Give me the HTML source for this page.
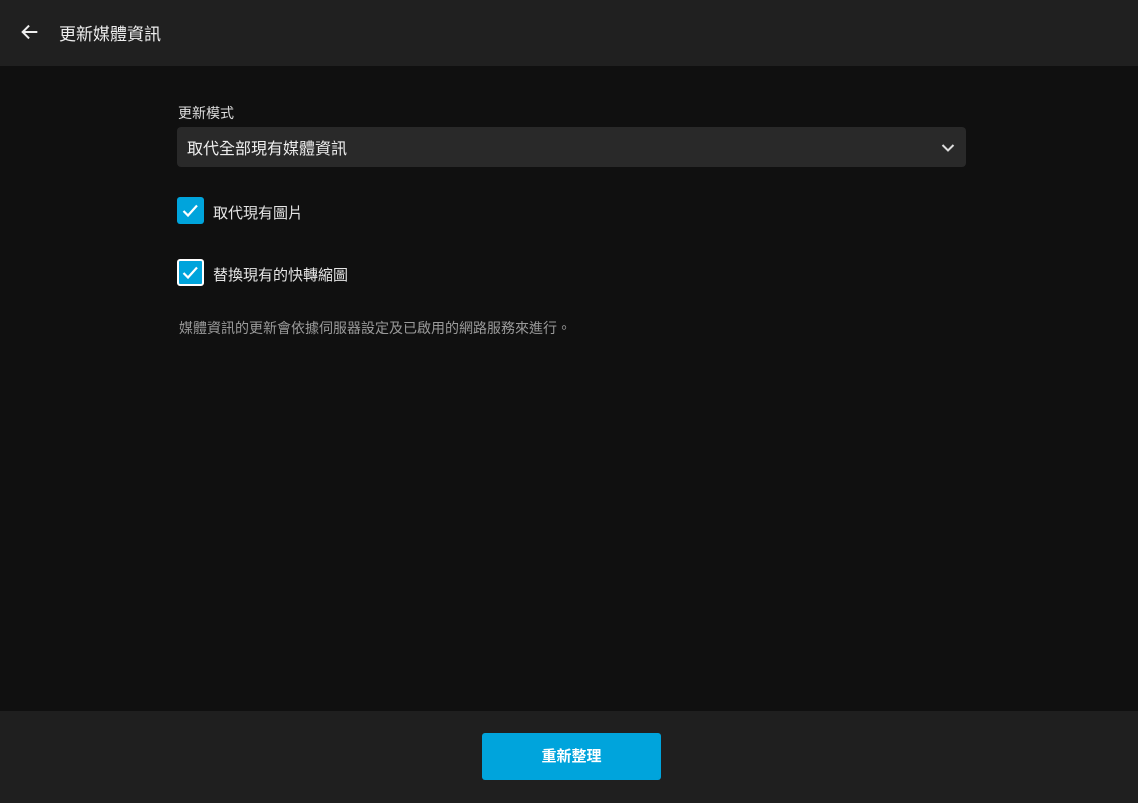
<!DOCTYPE html>
<html><head><meta charset="utf-8"><style>
body{margin:0;width:1138px;height:803px;background:#101010;font-family:"Liberation Sans","Noto Sans CJK TC",sans-serif;color:#e8e8e8;position:relative;overflow:hidden}
.hdr{position:absolute;left:0;top:0;width:1138px;height:66px;background:#202020}
.title{position:absolute;left:59px;top:20px;font-size:17px;color:#eee}
.lbl{position:absolute;left:178px;top:103px;font-size:14px;color:#ddd}
.sel{position:absolute;left:177px;top:127px;width:789px;height:40px;background:#292929;border-radius:4px}
.sel span{position:absolute;left:10px;top:8px;font-size:16px;color:#eee}
.cb{position:absolute;left:177px;width:27px;height:27px;background:#00a4dc;border-radius:3px;box-sizing:border-box}
.cbt{position:absolute;left:213px;font-size:15px;color:#e5e5e5}
.note{position:absolute;left:179px;top:318px;font-size:14px;color:#9a9a9a}
.ftr{position:absolute;left:0;top:711px;width:1138px;height:92px;background:#1f1f1f}
.btn{position:absolute;left:482px;top:733px;width:179px;height:47px;background:#00a4dc;border-radius:3px;color:#fff;font-weight:bold;font-size:15px;text-align:center;line-height:48px}
</style></head><body>
<div class="hdr">
<svg style="position:absolute;left:19px;top:21px" width="22" height="22" viewBox="0 0 24 24"><path d="M20 12H5M11 5l-7 7 7 7" fill="none" stroke="#eee" stroke-width="2.2"/></svg>
<div class="title">更新媒體資訊</div></div>
<div class="lbl">更新模式</div>
<div class="sel"><span>取代全部現有媒體資訊</span>
<svg style="position:absolute;left:764px;top:16px" width="14" height="10" viewBox="0 0 14 10"><path d="M1.5 2l5.5 5.5L12.5 2" fill="none" stroke="#ddd" stroke-width="2"/></svg></div>
<div class="cb" style="top:197px"><svg width="27" height="27" viewBox="0 0 27 27"><path d="M6.5 14l4.5 4.5 9-10" fill="none" stroke="#fff" stroke-width="2.2"/></svg></div>
<div class="cbt" style="top:202px">取代現有圖片</div>
<div class="cb" style="top:259px;border:2px solid #fff"><svg style="margin:-2px" width="27" height="27" viewBox="0 0 27 27"><path d="M6.5 14l4.5 4.5 9-10" fill="none" stroke="#fff" stroke-width="2.2"/></svg></div>
<div class="cbt" style="top:264px">替換現有的快轉縮圖</div>
<div class="note">媒體資訊的更新會依據伺服器設定及已啟用的網路服務來進行。</div>
<div class="ftr"></div>
<div class="btn">重新整理</div>
</body></html>
